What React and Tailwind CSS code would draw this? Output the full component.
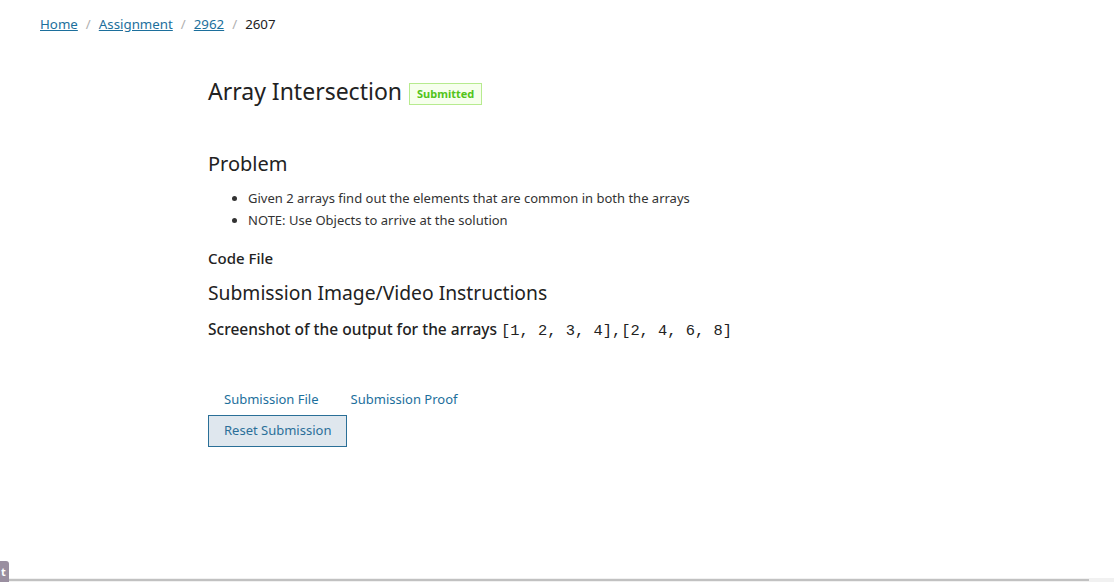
import React from 'react';

const font = { fontFamily: '"Noto Sans", "Open Sans", sans-serif' };

const Breadcrumb = () => (
  <nav className="flex items-center gap-[8px] text-[13.3px] leading-[20px]">
    <a href="#" className="text-[#1c6f9c] underline">Home</a>
    <span className="text-[#b0b0b0]">/</span>
    <a href="#" className="text-[#1c6f9c] underline">Assignment</a>
    <span className="text-[#b0b0b0]">/</span>
    <a href="#" className="text-[#1c6f9c] underline">2962</a>
    <span className="text-[#b0b0b0]">/</span>
    <span className="text-[#222]">2607</span>
  </nav>
);

export default function App() {
  return (
    <div className="relative w-full h-[582px] bg-white overflow-hidden text-[#222]" style={font}>
      <div className="pl-[40px] pt-[14px]">
        <Breadcrumb />
      </div>

      <main className="pl-[208px] pt-[40px]">
        <div className="flex items-center gap-[7px]">
          <h1 className="text-[23px] leading-[34px] text-[#222]">Array Intersection</h1>
          <span className="mt-[5px] h-[22px] border border-[#b7eb8f] bg-[#f6ffed] text-[#52c41a] text-[11px] font-bold leading-[20px] px-[7px]">
            Submitted
          </span>
        </div>

        <h2 className="mt-[42px] text-[20px] leading-[28px]">Problem</h2>
        <ul className="mt-[9px] pl-[40px] list-disc text-[13px] leading-[22px] text-[#333]">
          <li>Given 2 arrays find out the elements that are common in both the arrays</li>
          <li>NOTE: Use Objects to arrive at the solution</li>
        </ul>

        <h3 className="mt-[17px] text-[15px] leading-[20px] font-medium">Code File</h3>
        <h2 className="mt-[11px] text-[19.3px] leading-[28px]">Submission Image/Video Instructions</h2>
        <p className="mt-[12px] text-[15.5px] leading-[20px] font-medium">
          Screenshot of the output for the arrays{' '}
          <code className="font-normal text-[15.4px]" style={{ fontFamily: '"Liberation Mono", monospace' }}>[1, 2, 3, 4],[2, 4, 6, 8]</code>
        </p>

        <div className="mt-[48px] flex gap-[32px] pl-[16px] text-[13px] leading-[20px] text-[#1c6f9c]">
          <span>Submission File</span>
          <span>Submission Proof</span>
        </div>
        <button className="mt-[6px] h-[32px] px-[15px] border border-[#2a6f97] bg-[#dfe7ee] text-[#2b6f99] text-[13px]">
          Reset Submission
        </button>
      </main>

      <div className="absolute left-0 bottom-0 w-[9px] h-[21px] bg-[#9a8fa0] rounded-tr-[3px] text-white text-[11px] font-bold leading-[21px] pl-[1px] overflow-hidden">
        t
      </div>
      <div className="absolute left-[9px] right-0 bottom-0 h-[4px] bg-[#f1f1f1]">
        <div className="mt-[1px] w-[1080px] h-[2px] bg-[#c1c1c1]" />
      </div>
    </div>
  );
}
